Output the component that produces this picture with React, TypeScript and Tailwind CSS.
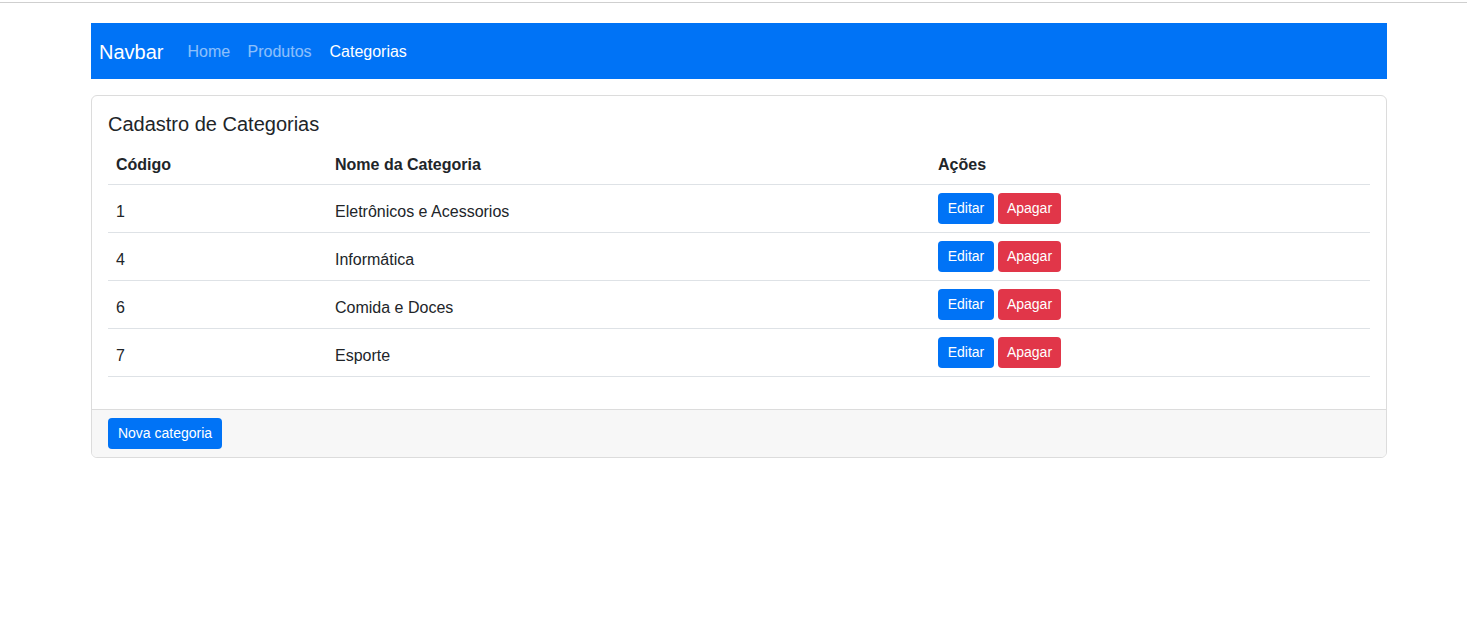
import React from "react";

const rows = [
  { id: 1, nome: "Eletrônicos e Acessorios" },
  { id: 4, nome: "Informática" },
  { id: 6, nome: "Comida e Doces" },
  { id: 7, nome: "Esporte" },
];

export default function App() {
  return (
    <div
      className="min-h-[623px] bg-white text-[#212529] text-[16px] leading-[1.5]"
      style={{ fontFamily: '"Liberation Sans", Arial, sans-serif' }}
    >
      <div className="h-[2px]" />
      <div className="h-px bg-[#cfcfcf]" />
      <div className="ml-[91px] w-[1296px] pt-[20px]">
        <nav className="flex h-[56px] items-center bg-[#0073f6] px-[8px] pt-[2px]">
          <span className="mr-[16px] text-[20px] leading-[30px] text-white">Navbar</span>
          <a className="w-[60px] px-[8px] text-white/55">Home</a>
          <a className="w-[82px] px-[8px] text-white/55">Produtos</a>
          <a className="px-[8px] text-white">Categorias</a>
        </nav>

        <div className="mt-[16px] overflow-hidden rounded-[6px] border border-[#dcdcdc]">
          <div className="p-[16px]">
            <h5 className="mb-[8px] text-[20px] font-medium leading-[24px]">Cadastro de Categorias</h5>
            <table className="mb-[16px] w-full border-collapse">
              <colgroup>
                <col className="w-[219px]" />
                <col className="w-[603px]" />
                <col />
              </colgroup>
              <thead>
                <tr className="border-b border-[#dee2e6]">
                  <th className="px-[8px] pt-[9px] pb-[7px] text-left font-bold">Código</th>
                  <th className="px-[8px] pt-[9px] pb-[7px] text-left font-bold">Nome da Categoria</th>
                  <th className="px-[8px] pt-[9px] pb-[7px] text-left font-bold">Ações</th>
                </tr>
              </thead>
              <tbody>
                {rows.map((r) => (
                  <tr key={r.id} className="h-[48px] border-b border-[#dee2e6]">
                    <td className="px-[8px] pt-[11px] pb-[5px] align-middle">{r.id}</td>
                    <td className="px-[8px] pt-[11px] pb-[5px] align-middle">{r.nome}</td>
                    <td className="p-[8px] align-middle">
                      <div className="flex gap-[4px]">
                        <button className="h-[31px] w-[56px] rounded-[4px] bg-[#0073f6] text-center text-[14px] leading-[21px] text-white">
                          Editar
                        </button>
                        <button className="h-[31px] w-[63px] rounded-[4px] bg-[#e13649] text-center text-[14px] leading-[21px] text-white">
                          Apagar
                        </button>
                      </div>
                    </td>
                  </tr>
                ))}
              </tbody>
            </table>
          </div>
          <div className="border-t border-[#dcdcdc] bg-[#f7f7f7] px-[16px] py-[8px]">
            <button className="h-[31px] w-[114px] rounded-[4px] bg-[#0073f6] text-center text-[14px] leading-[21px] text-white">
              Nova categoria
            </button>
          </div>
        </div>
      </div>
    </div>
  );
}
